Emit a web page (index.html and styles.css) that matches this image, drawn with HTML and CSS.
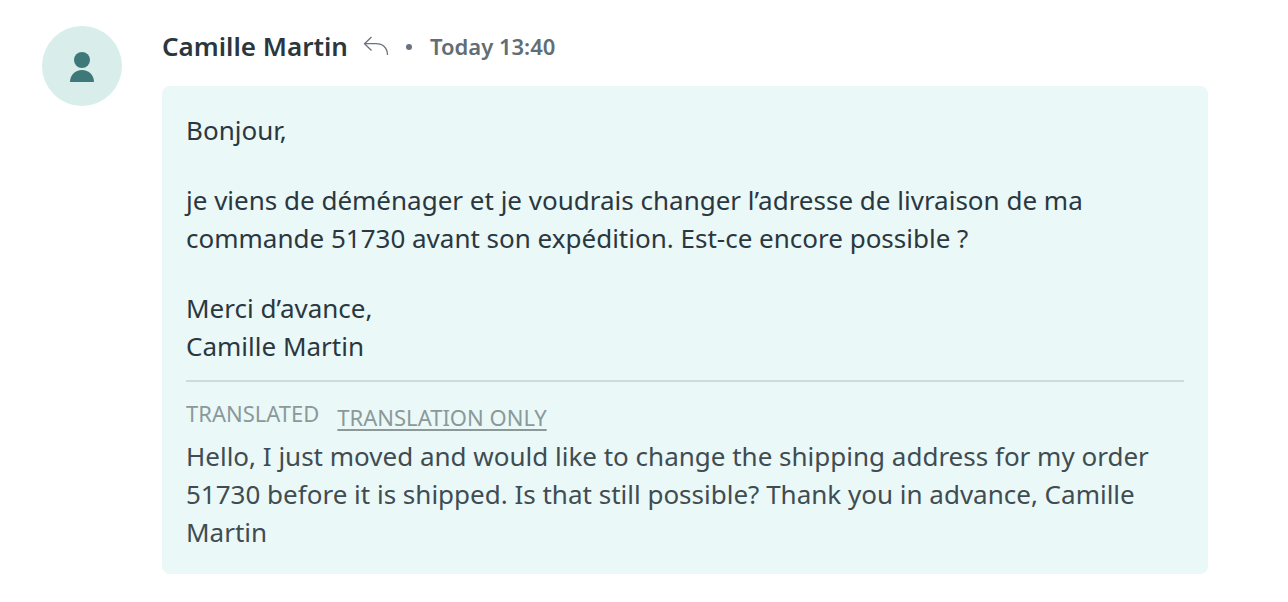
FILE: index.html
```html
<!DOCTYPE html>
<html lang="en">
<head>
<meta charset="utf-8">
<meta name="viewport" content="width=device-width, initial-scale=1">
<title>Conversation</title>
<link rel="stylesheet" href="styles.css">
</head>
<body>
<article class="message">
  <div class="avatar">
    <svg class="avatar-icon" viewBox="0 0 24 30" aria-hidden="true"><circle cx="12" cy="8" r="8"/><path d="M0 30c0-7 5-12 12-12s12 5 12 12z"/></svg>
  </div>
  <div class="content">
    <header class="meta">
      <strong class="sender">Camille Martin</strong>
      <button class="reply" type="button" aria-label="Reply"><svg class="reply-icon" viewBox="0 0 26 20" aria-hidden="true"><path d="M8.500 1 1.500 7.700 8.500 14.500M1.500 7.700H13C20 7.700 24.500 12 24.500 19"/></svg></button>
      <span class="dot"></span>
      <time class="time">Today 13:40</time>
    </header>
    <div class="bubble">
      <div class="original" lang="fr">
        <p>Bonjour,</p>
        <p>je viens de déménager et je voudrais changer l’adresse de livraison de ma commande 51730 avant son expédition. Est-ce encore possible ?</p>
        <p>Merci d’avance,<br>Camille Martin</p>
      </div>
      <section class="translation">
        <div class="labels"><span>TRANSLATED</span><a class="toggle" href="#">TRANSLATION ONLY</a></div>
        <p class="translated">Hello, I just moved and would like to change the shipping address for my order 51730 before it is shipped. Is that still possible? Thank you in advance, Camille Martin</p>
      </section>
    </div>
  </div>
</article>
</body>
</html>
```

FILE: styles.css
```css
body {
  margin: 0;
  background: #fff;
  color: #2b373f;
  font-family: "Segoe UI", "Noto Sans", sans-serif;
  font-size: 26px;
  line-height: 38px;
}
p { margin: 0; }
.message {
  display: flex;
  gap: 40px;
  padding: 26px 80px 28px 42px;
}
.avatar {
  display: flex;
  box-sizing: border-box;
  flex: none;
  align-items: flex-end;
  justify-content: center;
  width: 80px;
  height: 80px;
  padding-bottom: 24px;
  border-radius: 50%;
  background: #d9edeb;
}
.avatar-icon { width: 24px; height: 30px; fill: #3f7879; }
.content { flex: 1; min-width: 0; }
.meta {
  display: flex;
  align-items: center;
  height: 40px;
  margin-bottom: 20px;
}
.sender { font-weight: 600; }
.reply {
  display: flex;
  margin: 0 17px 0 15px;
  padding: 0;
  border: 0;
  background: none;
}
.reply-icon {
  width: 26px;
  height: 20px;
  fill: none;
  stroke: #68737d;
  stroke-width: 1.3;
}
.dot {
  width: 6px;
  height: 6px;
  margin: 2px 18px 0 0;
  border-radius: 50%;
  background: #68737d;
}
.time { color: #626d74; font-size: 22px; font-weight: 600; }
.bubble {
  padding: 25px 24px 23px;
  border-radius: 8px;
  background: #eaf8f8;
}
.original { display: grid; gap: 32px; }
.translation {
  margin-top: 15px;
  padding-top: 15px;
  border-top: 2px solid #cddbdb;
  color: #404c52;
}
.labels {
  display: flex;
  gap: 18px;
  padding-bottom: 4px;
  color: #8b9999;
  font-size: 22px;
  line-height: 32px;
}
.toggle {
  padding-top: 4px;
  color: inherit;
  text-decoration-thickness: 2px;
  text-underline-offset: 3px;
}
```
